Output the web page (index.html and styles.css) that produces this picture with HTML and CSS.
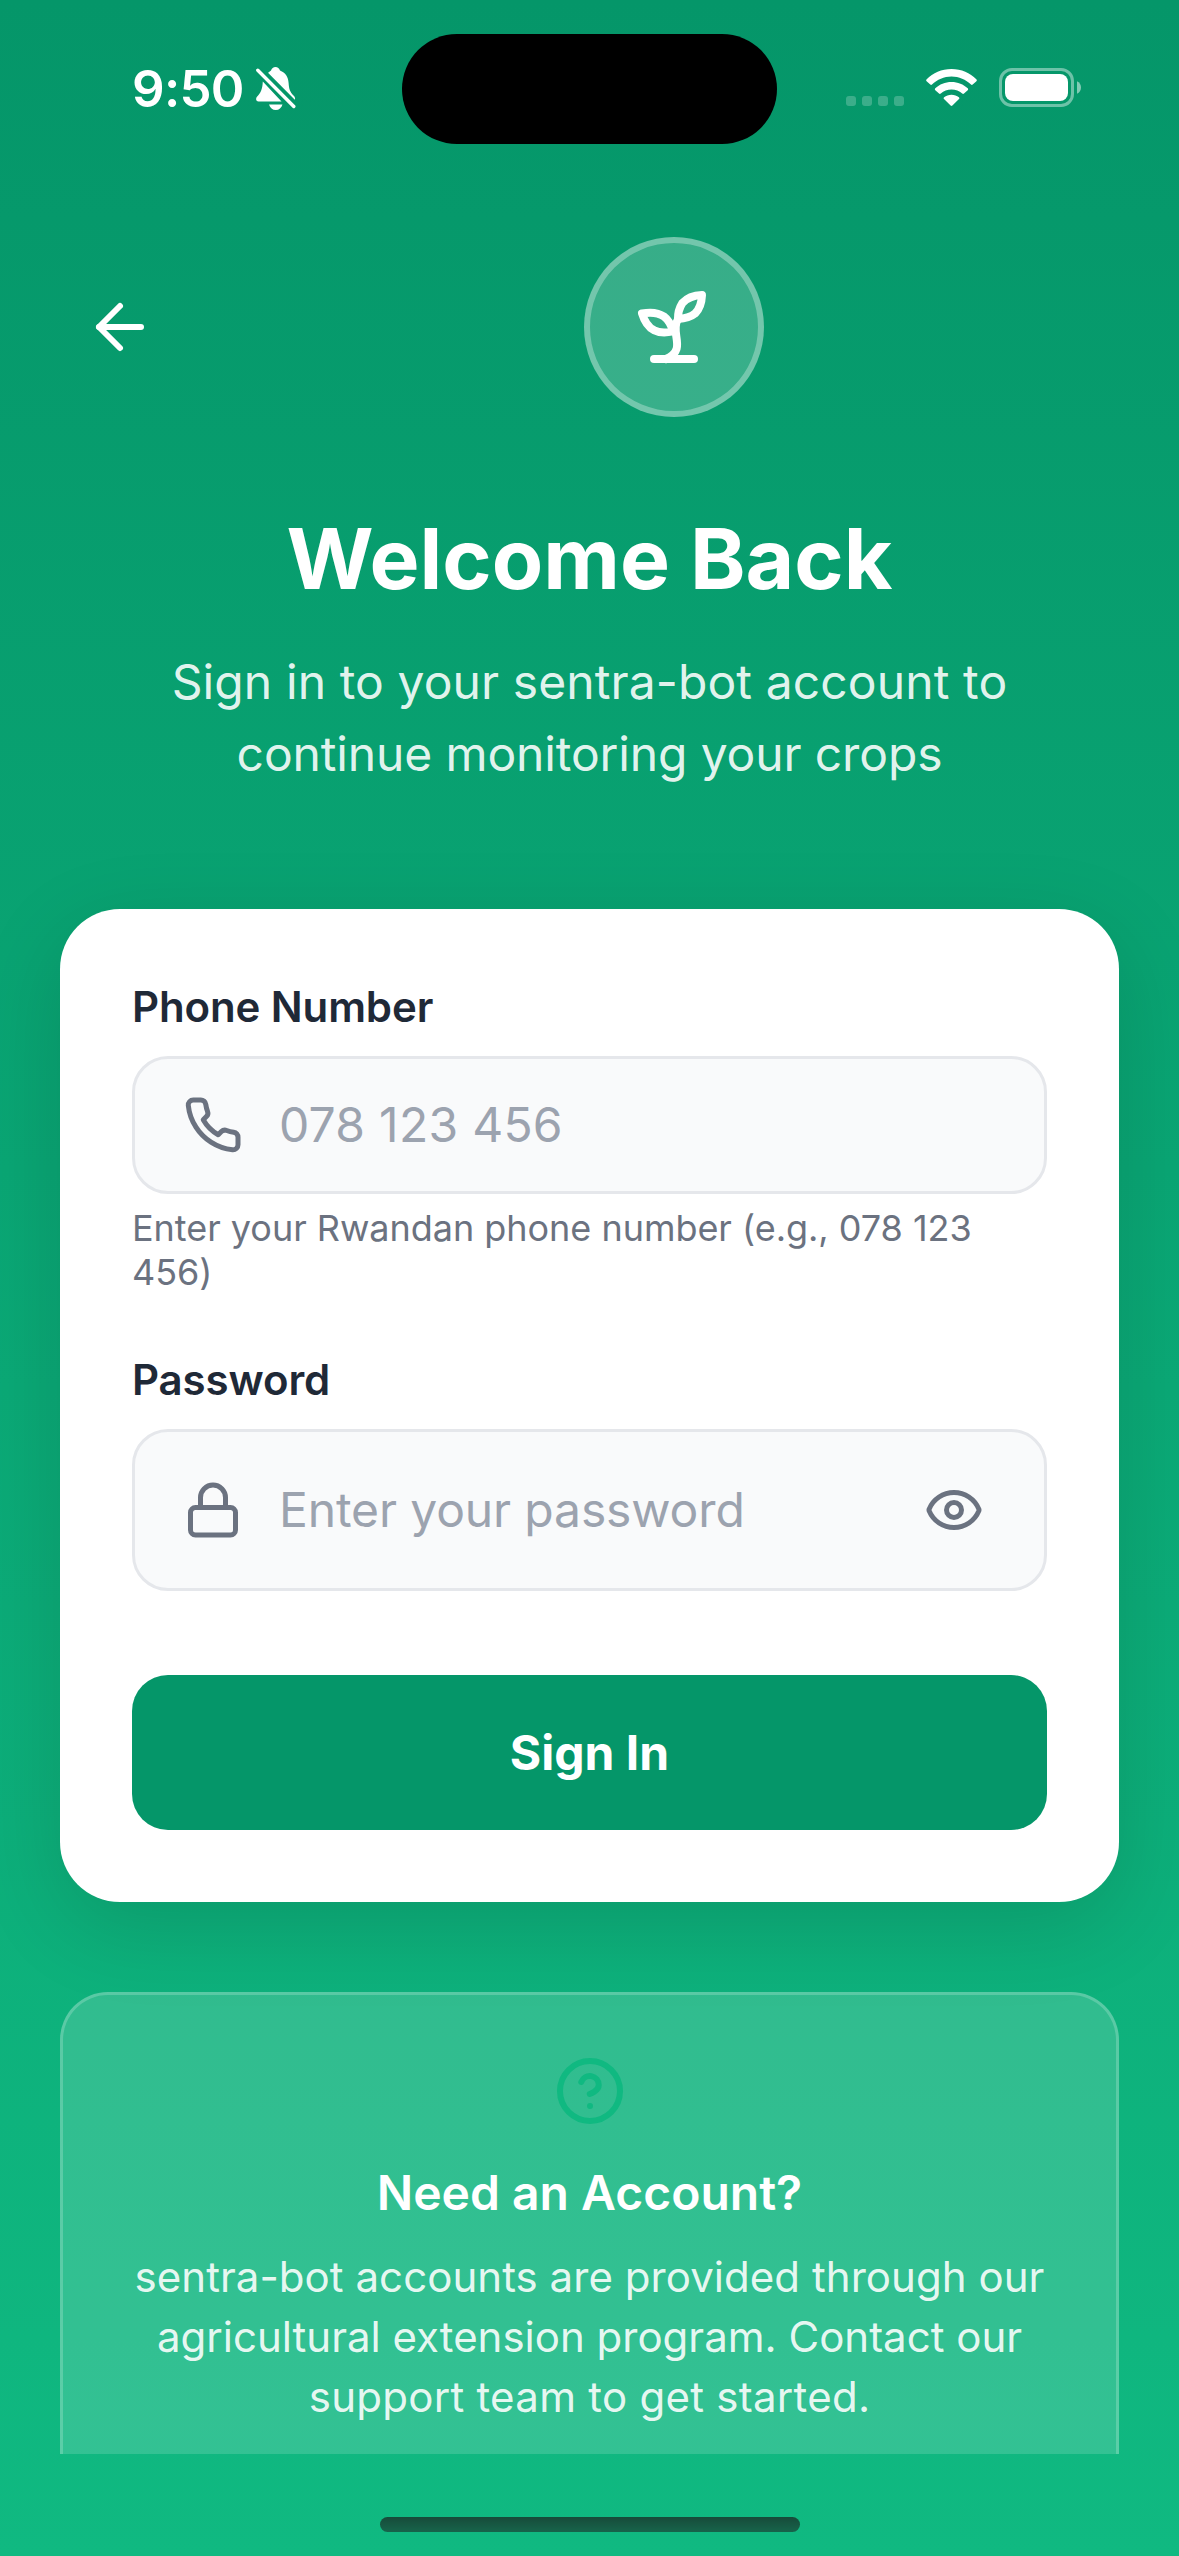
FILE: index.html
```html
<!DOCTYPE html>
<html lang="en">
<head>
<meta charset="utf-8">
<title>Sign In</title>
<link rel="stylesheet" href="styles.css">
</head>
<body>
<div class="screen">
  <div class="status-bar">
    <div class="status-left">
      <span class="time">9:50</span>
      <svg class="bell" viewBox="0 0 40 43" fill="#fff">
        <path d="M12 5.800C13 5 14.500 4.400 15 3.600C15.800 1.300 17.300 0 19.500 0C21.700 0 23.200 1.300 24 3.600C29.500 5.800 32.300 10 32.600 16C33 22 34 25 37.500 28.500C39 30 39.500 31.500 38.800 32.800Z"/>
        <path d="M6.800 14.500L25.500 34.500H2.500C0 34.500-.6 31.500 1 29.800C4.800 25.800 6.500 22 6.800 14.500Z"/>
        <path d="M13 37.500H26.500C25.500 41 23 43 19.800 43C16.500 43 14 41 13 37.500Z"/>
        <path d="M1.800 3.200L37.800 39.500" stroke="#059769" stroke-width="7"/>
        <path d="M1.800 3.200L37.800 39.500" stroke="#fff" stroke-width="3.400" stroke-linecap="round"/>
      </svg>
    </div>
    <div class="island"></div>
    <div class="status-right">
      <div class="cell"><i></i><i></i><i></i><i></i></div>
      <svg class="wifi" viewBox="0 0 51 37" fill="#fff">
        <path d="M25.500 0C35.500 0 44 3.800 50.300 10.200C51 10.900 51 11.600 50.400 12.300L46.700 15.600C46.200 16.100 45.500 16.100 45 15.600C39.800 10.600 33 7.600 25.500 7.600C18 7.600 11.200 10.600 6 15.600C5.500 16.100 4.800 16.100 4.300 15.600L.6 12.300C0 11.600 0 10.900.7 10.200C7 3.800 15.500 0 25.500 0Z"/>
        <path d="M25.500 13C31.800 13 37.500 15.300 41.700 19.300C42.300 19.900 42.300 20.600 41.700 21.200L38 24.600C37.500 25.100 36.800 25.100 36.200 24.600C33.300 22 29.700 20.500 25.500 20.500C21.300 20.500 17.700 22 14.800 24.600C14.200 25.100 13.500 25.100 13 24.600L9.300 21.200C8.700 20.600 8.700 19.900 9.300 19.300C13.500 15.300 19.200 13 25.500 13Z"/>
        <path d="M25.500 25.800C28.300 25.800 30.900 26.700 32.900 28.300C33.500 28.800 33.500 29.500 33 30.100L26.400 36.500C25.800 37.100 25.200 37.100 24.600 36.500L18 30.100C17.500 29.500 17.500 28.800 18.100 28.300C20.100 26.700 22.700 25.800 25.500 25.800Z"/>
      </svg>
      <svg class="battery" viewBox="0 0 82 39">
        <rect x="1.500" y="1.500" width="72" height="36" rx="11.500" fill="none" stroke="#fff" stroke-opacity=".42" stroke-width="3"/>
        <rect x="6" y="6" width="63" height="27" rx="8" fill="#fff"/>
        <path d="M78 13.300C80.500 14.300 82 16.800 82 19.500C82 22.200 80.500 24.700 78 25.700Z" fill="#fff" fill-opacity=".5"/>
      </svg>
    </div>
  </div>

  <main class="content">
    <header class="header">
      <div class="back">
        <svg class="icon icon-back" viewBox="0 0 24 24"><path d="m12 19-7-7 7-7"/><path d="M19 12H5"/></svg>
      </div>
      <div class="logo-wrap">
        <div class="logo">
          <svg class="icon icon-sprout" viewBox="0 0 24 24"><path d="M7 20h10"/><path d="M10 20c5.500-2.500.8-6.400 3-10"/><path d="M9.500 9.400c1.100.8 1.800 2.200 2.300 3.700-2 .4-3.500.4-4.800-.3-1.200-.6-2.300-1.900-3-4.200 2.800-.5 4.400 0 5.500.8z"/><path d="M14.100 6a7 7 0 0 0-1.100 4c1.900-.1 3.300-.6 4.300-1.400 1-1 1.600-2.300 1.700-4.600-2.700.1-4 1-4.900 2z"/></svg>
        </div>
      </div>
    </header>

    <h1 class="title">Welcome Back</h1>
    <p class="subtitle"><span class="loose">Sign in to your sentra-bot account to</span><br><span class="tight">continue monitoring your crops</span></p>

    <section class="card">
      <div class="label">Phone Number</div>
      <div class="field field-phone">
        <svg class="icon icon-field" viewBox="0 0 24 24"><path d="M22 16.920v3a2 2 0 0 1-2.180 2 19.790 19.790 0 0 1-8.630-3.070 19.500 19.500 0 0 1-6-6 19.790 19.790 0 0 1-3.070-8.670A2 2 0 0 1 4.110 2h3a2 2 0 0 1 2 1.720 12.840 12.840 0 0 0 .7 2.810 2 2 0 0 1-.45 2.110L8.090 9.910a16 16 0 0 0 6 6l1.270-1.270a2 2 0 0 1 2.110-.45 12.840 12.840 0 0 0 2.810.7A2 2 0 0 1 22 16.920z"/></svg>
        <span class="placeholder looser">078 123 456</span>
      </div>
      <p class="hint">Enter your Rwandan phone number (e.g., 078 123<br>456)</p>
      <div class="label">Password</div>
      <div class="field field-password">
        <svg class="icon icon-field" viewBox="0 0 24 24"><rect x="3" y="11" width="18" height="11" rx="2"/><path d="M7 11V7a5 5 0 0 1 10 0v4"/></svg>
        <span class="placeholder tight">Enter your password</span>
        <svg class="icon icon-field icon-eye" viewBox="0 0 24 24"><path d="M2.062 12.348a1 1 0 0 1 0-.696 10.750 10.750 0 0 1 19.876 0 1 1 0 0 1 0 .696 10.750 10.750 0 0 1-19.876 0"/><circle cx="12" cy="12" r="3"/></svg>
      </div>
      <div class="button">Sign In</div>
    </section>

    <section class="info">
      <svg class="icon icon-help" viewBox="0 0 24 24"><circle cx="12" cy="12" r="10"/><path d="M9.090 9a3 3 0 0 1 5.830 1c0 2-3 3-3 3"/><path d="M12 17h.01"/></svg>
      <h2 class="info-title">Need an Account?</h2>
      <p class="info-text"><span class="info-first">sentra-bot accounts are provided through our</span><br>agricultural extension program. Contact our<br><span class="looser">support team to get started.</span></p>
    </section>
  </main>

  <div class="home-indicator"></div>
</div>
</body>
</html>
```
FILE: styles.css
```css
* {
  box-sizing: border-box;
}

body {
  margin: 0;
  font-family: Inter, "Liberation Sans", sans-serif;
}

.screen {
  width: 1179px;
  height: 2556px;
  overflow: hidden;
  display: flex;
  flex-direction: column;
  align-items: center;
  background: linear-gradient(#059669, #10b981);
}

.status-bar {
  width: 100%;
  height: 177px;
  flex: none;
  display: grid;
  grid-template-columns: 1fr 375px 1fr;
  align-items: start;
}

.status-left {
  display: flex;
  padding: 58px 0 0 132px;
  gap: 12px;
}

.time {
  font-size: 51px;
  line-height: 62px;
  font-weight: 600;
  letter-spacing: -0.7px;
  color: #fff;
}

.bell {
  width: 40px;
  height: 43px;
  margin-top: 9px;
}

.island {
  height: 110px;
  margin-top: 34px;
  border-radius: 55px;
  background: #000;
}

.status-right {
  display: flex;
  justify-content: flex-end;
  padding: 68px 98px 0 0;
}

.cell {
  display: flex;
  gap: 6px;
  margin: 28px 22px 0 0;
}

.cell i {
  width: 10px;
  height: 10px;
  border-radius: 3px;
  background: rgba(255, 255, 255, 0.22);
}

.wifi {
  width: 51px;
  height: 37px;
  margin: 1px 22px 0 0;
}

.battery {
  width: 82px;
  height: 39px;
}

.content {
  width: 1059px;
  height: 2277px;
  flex: none;
  margin-bottom: 63px;
  padding-top: 60px;
  clip-path: inset(0 -60px);
}

.icon {
  display: block;
  fill: none;
  stroke: currentColor;
  stroke-width: 2;
  stroke-linecap: round;
  stroke-linejoin: round;
}

.header {
  display: flex;
  align-items: center;
  gap: 49px;
  color: #fff;
}

.back {
  width: 120px;
  height: 120px;
  display: flex;
  align-items: center;
  justify-content: center;
}

.icon-back {
  width: 72px;
  height: 72px;
}

.logo-wrap {
  flex: 1;
  display: flex;
  justify-content: center;
}

.logo {
  width: 180px;
  height: 180px;
  display: flex;
  align-items: center;
  justify-content: center;
  border: 6px solid rgba(255, 255, 255, 0.3);
  border-radius: 50%;
  background: rgba(255, 255, 255, 0.2);
}

.icon-sprout {
  width: 96px;
  height: 96px;
}

.title {
  margin: 91px 0 36px;
  font-size: 84px;
  line-height: 102px;
  font-weight: 700;
  text-align: center;
  color: #fff;
}

.subtitle {
  margin: 0 0 119px;
  font-size: 48px;
  line-height: 72px;
  text-align: center;
  color: rgba(255, 255, 255, 0.9);
}

.loose {
  letter-spacing: 0.1px;
}

.looser {
  letter-spacing: 0.27px;
}

.tight {
  letter-spacing: -0.13px;
}

.card {
  height: 993px;
  padding: 72px;
  border-radius: 60px;
  background: #fff;
  box-shadow: 0 24px 88px rgba(0, 0, 0, 0.135);
}

.label {
  margin-bottom: 24px;
  font-size: 42px;
  line-height: 51px;
  font-weight: 600;
  letter-spacing: -0.12px;
  color: #1f2937;
}

.field {
  display: flex;
  align-items: center;
  padding: 0 60px 0 48px;
  border: 3px solid #e5e7eb;
  border-radius: 36px;
  background: #f9fafb;
  color: #6b7280;
}

.field-phone {
  height: 138px;
}

.field-password {
  height: 162px;
}

.icon-field {
  width: 60px;
  height: 60px;
}

.placeholder {
  margin-left: 36px;
  font-size: 48px;
  line-height: 58px;
  color: #9ca3af;
}

.icon-eye {
  margin-left: auto;
}

.hint {
  margin: 12px 0 60px;
  font-size: 36px;
  line-height: 44px;
  letter-spacing: -0.03px;
  color: #6b7280;
}

.button {
  height: 155px;
  margin-top: 84px;
  display: flex;
  align-items: center;
  justify-content: center;
  border-radius: 36px;
  background: #059669;
  font-size: 48px;
  font-weight: 700;
  color: #fff;
}

.info {
  height: 640px;
  margin-top: 90px;
  padding: 60px 0;
  border: 3px solid rgba(255, 255, 255, 0.2);
  border-radius: 48px;
  background: rgba(255, 255, 255, 0.15);
  text-align: center;
}

.icon-help {
  width: 72px;
  height: 72px;
  margin: 0 auto;
  color: #10b981;
}

.info-title {
  margin: 37px 0 25px;
  font-size: 48px;
  line-height: 58px;
  font-weight: 600;
  color: #fff;
}

.info-text {
  margin: 0;
  font-size: 42px;
  line-height: 60px;
  color: rgba(255, 255, 255, 0.9);
}

.info-first {
  letter-spacing: 0.05px;
}

.home-indicator {
  width: 420px;
  height: 15px;
  flex: none;
  border-radius: 8px;
  background: linear-gradient(#174b3a, #17644b);
}
```
